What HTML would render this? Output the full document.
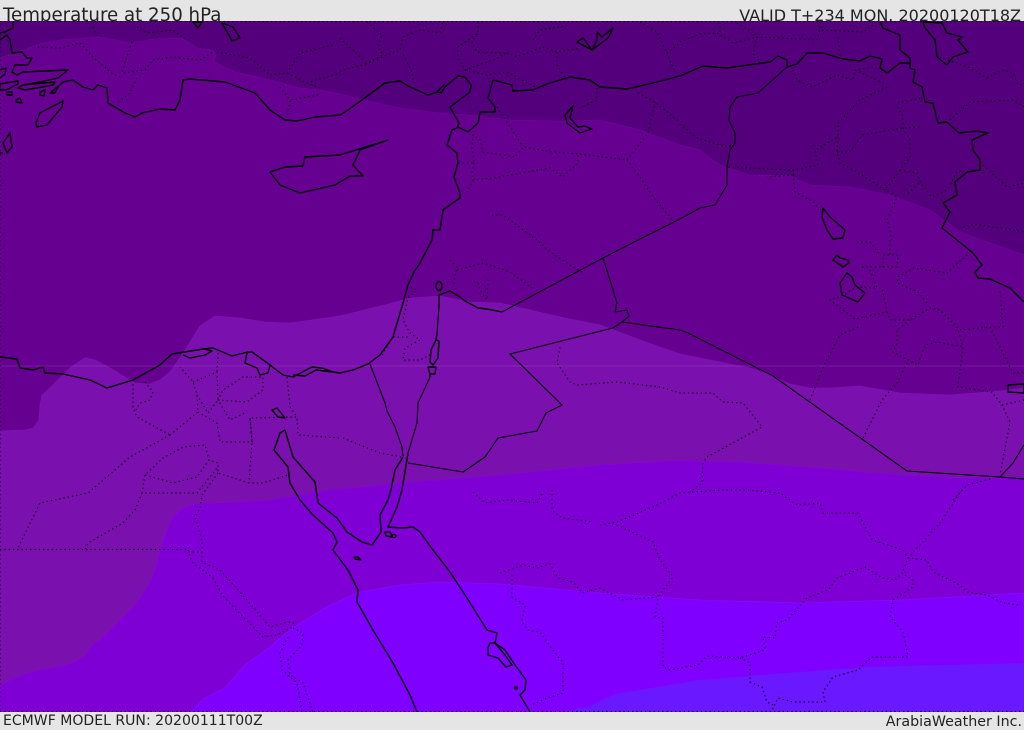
<!DOCTYPE html>
<html><head><meta charset="utf-8"><style>
html,body{margin:0;padding:0;width:1024px;height:729px;overflow:hidden;background:#e5e5e5}
.t{position:absolute;font-family:"DejaVu Sans",sans-serif;color:#222;white-space:nowrap;line-height:1}
svg{position:absolute;left:0;top:0}
.d polyline{fill:none;stroke:#000;stroke-opacity:.9;stroke-width:1.2;stroke-dasharray:1.3 3}
.c polyline,.c polygon,.c ellipse{fill:none;stroke:#000;stroke-width:1.4;stroke-linejoin:round}
.b polyline{fill:none;stroke:#000;stroke-width:1.1;stroke-linejoin:round}
</style></head><body>
<div class="t" style="left:3px;top:7px;font-size:18.2px">Temperature at 250 hPa</div>
<div class="t" style="right:3px;top:8px;font-size:16px">VALID T+234 MON. 20200120T18Z</div>
<div class="t" style="left:3px;top:714px;font-size:14.05px">ECMWF MODEL RUN: 20200111T00Z</div>
<div class="t" style="right:2px;top:715px;font-size:14.25px">ArabiaWeather Inc.</div>
<svg width="1024" height="729" viewBox="0 0 1024 729">
<defs><clipPath id="m"><rect x="0" y="21" width="1024" height="691"/></clipPath></defs>
<g clip-path="url(#m)">
<rect x="0" y="21" width="1024" height="691" fill="#54007c"/>
<polygon fill="#660090" stroke="#6d0a98" stroke-width=".6" points="0,58 23,50 40,44 60,40 85,38 100,37 130,43 155,39 180,38 190,43 197,48 213,50 216,55 214,62 235,72 270,80 300,88 320,90 340,94 365,100 385,105 400,108 440,113 470,115 510,120 560,121 600,120 640,130 680,145 700,150 712,160 725,167 750,175 790,176 810,185 850,187 890,195 930,210 960,232 990,243 1024,255 1024,712 0,712"/>
<polygon fill="#7a10ad" stroke="#8218b4" stroke-width=".6" points="0,431 25,430 33,428 39,420 40,405 42,395 50,388 70,368 85,358 95,360 110,368 135,383 150,384 160,380 170,372 180,358 190,342 200,326 215,316 240,318 265,322 290,323 340,316 385,305 410,298 440,296 470,302 500,303 530,310 560,317 600,325 640,340 680,354 720,362 750,368 770,375 790,384 810,388 830,388 860,386 900,393 950,395 1000,391 1024,388 1024,712 0,712"/>
<polygon fill="#7f00d5" stroke="#8608da" stroke-width=".6" points="0,685 15,678 30,672 70,664 85,656 92,645 100,640 118,622 135,605 148,585 155,570 160,550 165,535 172,518 182,508 195,504 270,500 330,490 400,483 500,475 600,465 680,460 740,462 820,468 900,475 960,478 1024,478 1024,712 0,712"/>
<polygon fill="#8000ff" stroke="#8a0dff" stroke-width=".6" points="190,712 205,698 225,688 245,665 270,647 290,630 310,617 330,605 360,592 400,585 440,582 500,584 600,593 700,600 800,603 900,600 1024,593 1024,712"/>
<polygon fill="#6a18ff" points="560,712 590,706 615,694 700,680 800,672 870,667 1024,663 1024,712"/>
<rect x="0" y="365.5" width="1024" height="1" fill="#fff" fill-opacity=".1"/>
<g class="d">
<polyline points="0,21 0,712"/>
<polyline points="0,711.5 1024,711.5" stroke-dasharray="1 3"/>
<polyline points="0,21.5 1024,21.5" stroke-dasharray="1 3"/>
<polyline points="38,47 60,48 80,43 93,57 110,72 120,77"/>
<polyline points="132,42 125,62 122,73 145,70 153,60 173,57 200,60 213,52"/>
<polyline points="137,78 130,93 117,103"/>
<polyline points="93,27 97,37"/><polyline points="137,27 147,33 173,30 187,40"/>
<polyline points="217,52 250,58 270,75 287,73 307,83 320,88"/>
<polyline points="287,73 300,53 333,45"/><polyline points="307,83 340,73"/>
<polyline points="280,87 290,100 287,117"/><polyline points="318,95 290,100"/>
<polyline points="340,71 363,65 400,50 403,37 420,30 440,33 443,22"/>
<polyline points="367,22 382,35 378,48 383,55 363,65"/>
<polyline points="340,38 353,50 365,62"/><polyline points="403,55 412,72 413,83"/>
<polyline points="478,22 478,33 458,47 458,58 465,70 487,75 507,72 537,88"/>
<polyline points="465,70 493,60 507,53 477,52 472,43 478,33"/>
<polyline points="507,53 517,57 543,47 557,52 580,48"/><polyline points="557,52 557,65 565,78"/>
<polyline points="533,40 540,30 570,25"/>
<polyline points="640,22 657,32 667,53 675,72"/><polyline points="667,53 680,43"/>
<polyline points="597,88 597,100 580,108"/>
<polyline points="638,93 655,102 680,122"/>
<polyline points="655,102 648,133 627,160 580,154 553,152 523,147 515,157 483,152 480,140 473,135 472,147 474,163 458,163"/>
<polyline points="497,107 517,137 523,147"/>
<polyline points="474,163 472,173 473,180 493,178 550,168 563,177 578,163 578,154"/>
<polyline points="627,160 640,177 653,197 673,220"/><polyline points="473,180 467,192"/>
<polyline points="492,215 503,215 537,240 550,252 573,267 582,272"/>
<polyline points="450,260 457,267 453,287"/><polyline points="457,270 483,263 510,272 532,288"/>
<polyline points="478,283 480,290 487,300 488,277"/>
<polyline points="407,285 417,290 408,298 403,320 410,333 420,340 405,348 403,360 420,360 430,355"/>
<polyline points="382,355 393,337 410,337"/>
<polyline points="560,347 557,363 570,382 577,385 617,382 660,387 680,393 713,393 723,402 743,403 762,427 707,457 703,463 702,483 690,492"/>
<polyline points="343,438 360,445 380,453 402,457"/>
<polyline points="133,380 133,407 137,417 170,435"/>
<polyline points="145,382 153,392 150,400 140,403 135,412"/>
<polyline points="170,435 198,412 197,395 193,382 180,367"/>
<polyline points="193,382 217,372 218,400 208,413 197,395"/>
<polyline points="218,353 217,372"/>
<polyline points="218,400 247,402 263,390 263,377 243,377 223,390 218,400 230,420 247,412"/>
<polyline points="198,412 217,423 220,442 252,442 250,418 297,417 298,435 340,438"/>
<polyline points="250,418 252,442 249,483 263,483 288,475"/>
<polyline points="249,483 218,473 218,463 209,460 205,445 183,447 163,458 145,475 173,483 197,477 209,460"/>
<polyline points="145,475 142,493 197,493 218,467"/>
<polyline points="218,473 202,495 200,508 195,517 202,540 202,552 188,552"/>
<polyline points="142,493 135,510 123,523 88,543 85,550"/>
<polyline points="170,435 130,457 88,493 40,503 18,548"/>
<polyline points="0,549.5 188,549.5"/>
<polyline points="287,377 290,407 297,417"/>
<polyline points="188,550 192,562 213,578 222,595 253,627 263,637 277,635 293,627"/>
<polyline points="202,552 202,562 220,570 247,600 270,627 287,622 295,623"/>
<polyline points="293,628 303,633 302,645 288,660 290,675 303,683 313,712"/>
<polyline points="288,637 280,653 282,670 297,683 302,710"/>
<polyline points="500,573 523,565 537,568 550,564 558,578 573,582 582,593 600,588 623,600 657,597"/>
<polyline points="512,575 512,597 525,605 522,622 528,630 540,632 555,653 563,662 563,693 547,698 532,705"/>
<polyline points="473,492 485,503 507,500 537,503 543,492"/>
<polyline points="552,490 552,510 562,518 593,522"/>
<polyline points="600,525 617,522 653,507 680,493 723,490 747,490 780,493 797,505 820,503 823,513 858,513 872,540 903,550 908,558 927,560 933,572 960,585 967,592 987,595 1003,603 1020,605"/>
<polyline points="617,525 653,542 660,560 673,577 658,597 655,617 663,618 663,667 670,670 698,665 707,656 740,658 765,650 763,637 775,638 777,623 787,620 807,598 828,590 837,578 865,567 882,578 895,580 902,573 913,580 913,587 893,600 890,617 903,632 908,657 872,657 858,670 833,677 823,692 825,702 793,702 778,698 772,710"/>
<polyline points="740,658 750,663 750,682 762,687 767,702 773,705"/>
<polyline points="962,490 940,523 918,547 908,558 902,573"/>
<polyline points="967,255 947,273 913,268 898,277 897,283 918,292 927,303"/>
<polyline points="862,267 897,267 898,255 883,255 883,267"/>
<polyline points="857,242 870,242 880,255"/><polyline points="890,240 890,255"/>
<polyline points="870,270 877,288 857,287 843,295 830,300 855,319 887,312 882,288"/>
<polyline points="887,312 890,320 910,320 930,308 940,310 957,327 963,347 958,387 992,392 1002,405 1010,422 1000,475"/>
<polyline points="910,320 897,330 897,343 893,352 918,365 925,345 937,342 963,347"/>
<polyline points="960,330 990,327 1003,327 1000,290"/>
<polyline points="990,327 1008,363 1013,373 1024,372"/>
<polyline points="1002,405 1024,400"/>
<polyline points="858,327 840,335 825,363 810,400"/>
<polyline points="907,363 897,383 882,400 862,440"/>
<polyline points="953,500 967,485 990,479"/>
<polyline points="680,42 700,34 717,33 733,43 757,37 780,38 817,40 820,30 863,32 873,25"/>
<polyline points="720,32 720,23"/><polyline points="737,23 757,35"/>
<polyline points="757,37 753,57 760,60"/><polyline points="820,22 820,30"/><polyline points="838,37 840,57"/>
<polyline points="793,70 797,80 812,87 837,75 853,80 855,70 873,67"/>
<polyline points="855,70 883,83"/>
<polyline points="887,87 860,100 838,123 838,137 815,150 818,165 793,170 727,167"/>
<polyline points="793,175 767,177"/>
<polyline points="793,170 795,192 815,203 820,213"/>
<polyline points="838,137 837,152 840,163 857,172 885,190 897,197 887,220 892,240"/>
<polyline points="837,152 850,152 862,135 903,128 920,127"/>
<polyline points="903,128 910,140 910,157 885,190"/>
<polyline points="898,107 903,117 903,128"/><polyline points="898,103 922,98"/>
<polyline points="900,170 917,173 920,182 932,197 947,190 957,172 963,170"/>
<polyline points="908,193 920,182"/>
<polyline points="950,120 970,102 1013,100 1024,107"/>
<polyline points="980,162 1007,187 1024,183"/>
<polyline points="940,57 970,68 987,78 1003,70 1013,73 1017,83 1024,86"/>
<polyline points="963,227 973,224 1024,232"/>
<polyline points="680,124 697,138 723,146 732,146"/>
</g>
<g class="b">
<polyline points="502,312 603,258 638,240 680,219 700,208 715,205 727,185 727,167 730,150 735,143 735,133 729,120 730,107 737,97 758,93 787,67"/>
<polyline points="603,258 617,303 615,312 627,310 629,316 622,322 613,328 510,354 562,405 546,413 537,431 498,438 485,457 463,472 408,463"/>
<polyline points="622,322 680,330 688,333 773,376 907,471 1000,477 1024,479"/>
<polyline points="1000,477 1013,463 1024,445"/>
<polyline points="370,364 385,403 387,411 395,427 402,447 403,456"/>
<polyline points="439,307 437,333"/><polyline points="430,377 418,403 417,423 408,453"/>
</g>
<g class="c">
<polyline points="0,40 7,35 10,40 12,53 22,52 27,58 32,58 28,65 15,65 12,72 17,75 23,72 68,70 58,78 45,81 23,85"/>
<polyline points="13,22 13,28 5,32 0,33"/>
<polyline points="0,70 6,68 5,74 0,78"/>
<polyline points="63,82 50,93 55,93 58,87 63,82 73,80 83,87 93,90 98,85 107,88 108,103 125,113 135,117 142,113 160,109 175,110 180,100 183,80 190,79 225,82 255,93 270,110 285,120 297,121 315,117 340,115 345,112 362,100 385,83 400,81 408,86 428,95 437,92 441,93 445,87 458,76 465,77 471,85 470,92 450,107 459,123 457,128 452,130 447,145 457,153 458,163 454,177 460,193 460,198 443,210 440,230 433,230 432,240 420,263 414,272 408,285 403,303 393,337 380,355 368,364 353,370 340,373 333,372 322,368 312,367 293,377 283,375 270,365 252,352 248,352 232,356 213,348 203,349 172,354 160,365 133,380 107,388 90,380 63,374 45,373 43,367 33,370 20,368 17,359 0,357"/>
<polyline points="437,92 444,85 439,90"/>
<polygon points="18,88 23,85 55,82 53,85 25,90"/>
<polygon points="0,84 18,81 18,84 6,90 0,90"/>
<polygon points="63,101 40,113 36,123 37,127 47,125 62,107"/>
<polygon points="10,133 3,143 7,153 12,147"/>
<polyline points="0,153 3,153"/>
<polygon points="7,92 12,92 12,95 7,95"/><polygon points="16,100 20,98 22,103 16,102"/>
<polygon points="40,92 45,90 44,96 40,95"/>
<polygon points="270,172 280,185 300,193 335,185 350,176 363,176 353,165 360,150 388,140 340,155 305,157 303,166 285,167"/>
<polyline points="493,80 488,98 495,107 495,112 480,112 478,123 468,132 458,127"/>
<polyline points="493,80 512,85 513,91 533,90 547,84 570,77 590,80 600,87 627,89 653,83 680,76 703,66 727,68 770,62 778,56 787,60 787,67 797,64 807,53 823,53 843,59 860,61 870,56 882,59 880,68 887,73 900,63 910,63 910,68 915,70 913,82 922,87 925,102 933,103 938,123 947,122 959,133 977,131 988,133 972,140 973,150 980,160 980,170 967,172 955,182 957,195 943,203 950,212 942,228 957,240 973,253 982,265 975,272 978,278 990,279 1010,288 1024,302"/>
<polyline points="880,22 883,28 900,35 900,50 910,58 910,63"/>
<polygon points="923,22 925,28 935,40 937,57 947,65 953,57 968,52 958,40 962,37 947,33 942,23"/>
<polygon points="577,42 583,38 592,50 597,40 597,32 602,37 613,28 608,38 592,50"/>
<polygon points="573,106 565,115 567,123 580,133 592,129 585,126 578,127 570,118"/>
<polygon points="222,23 232,41 240,38 233,27"/>
<polygon points="193,22 198,28 202,22"/>
<polygon points="823,208 822,217 827,230 833,239 843,238 845,230 837,223 830,217"/>
<polygon points="837,255 833,260 843,267 849,263 848,260 840,258"/>
<polygon points="847,273 840,283 842,295 858,302 865,293 855,285 852,277"/>
<polygon points="1008,385 1008,392 1024,393 1024,384"/>
<polyline points="502,312 487,309 478,308 465,301 460,297 450,291 439,295 439,307"/>
<ellipse cx="439" cy="286" rx="3" ry="4.5"/>
<polygon points="431,350 436,340 439,341 438,358 433,365 430,362"/>
<polygon points="428,367 436,367 435,374 430,374"/>
<polyline points="437,333 436,340"/><polyline points="430,374 430,377"/>
<polyline points="183,355 190,358 205,355 212,351 205,349"/>
<polyline points="247,353 245,363 257,368 260,375 268,373 270,365"/>
<polyline points="293,375 305,376 316,370 333,372"/>
<polygon points="272,410 277,408 285,418 278,417"/>
<polyline points="285,430 280,433 274,450 288,467 290,483 300,500 313,515 333,533 337,542 333,550 348,570 358,590 357,602 373,630 393,663 410,695 417,712"/>
<polyline points="285,430 293,457 315,482 318,503 337,518 347,532 362,542 372,545 381,532 380,515 388,500 391,490 395,470 403,457"/>
<polyline points="408,453 402,490 397,507 388,527 402,528 413,527 420,532 433,550 450,572 467,598 487,630 497,633 495,643 505,650 515,665 526,680 525,690 520,695 530,712"/>
<polygon points="385,532 390,532 392,537 386,536"/><ellipse cx="394" cy="536" rx="2" ry="1.5"/>
<polygon points="354,557 358,557 361,560 355,559"/>
<polygon points="488,648 490,643 495,643 505,655 512,665 506,667 498,658 488,655"/>
<ellipse cx="516" cy="688" rx="1.5" ry="1"/>
</g>
</g>
</svg>
</body></html>
